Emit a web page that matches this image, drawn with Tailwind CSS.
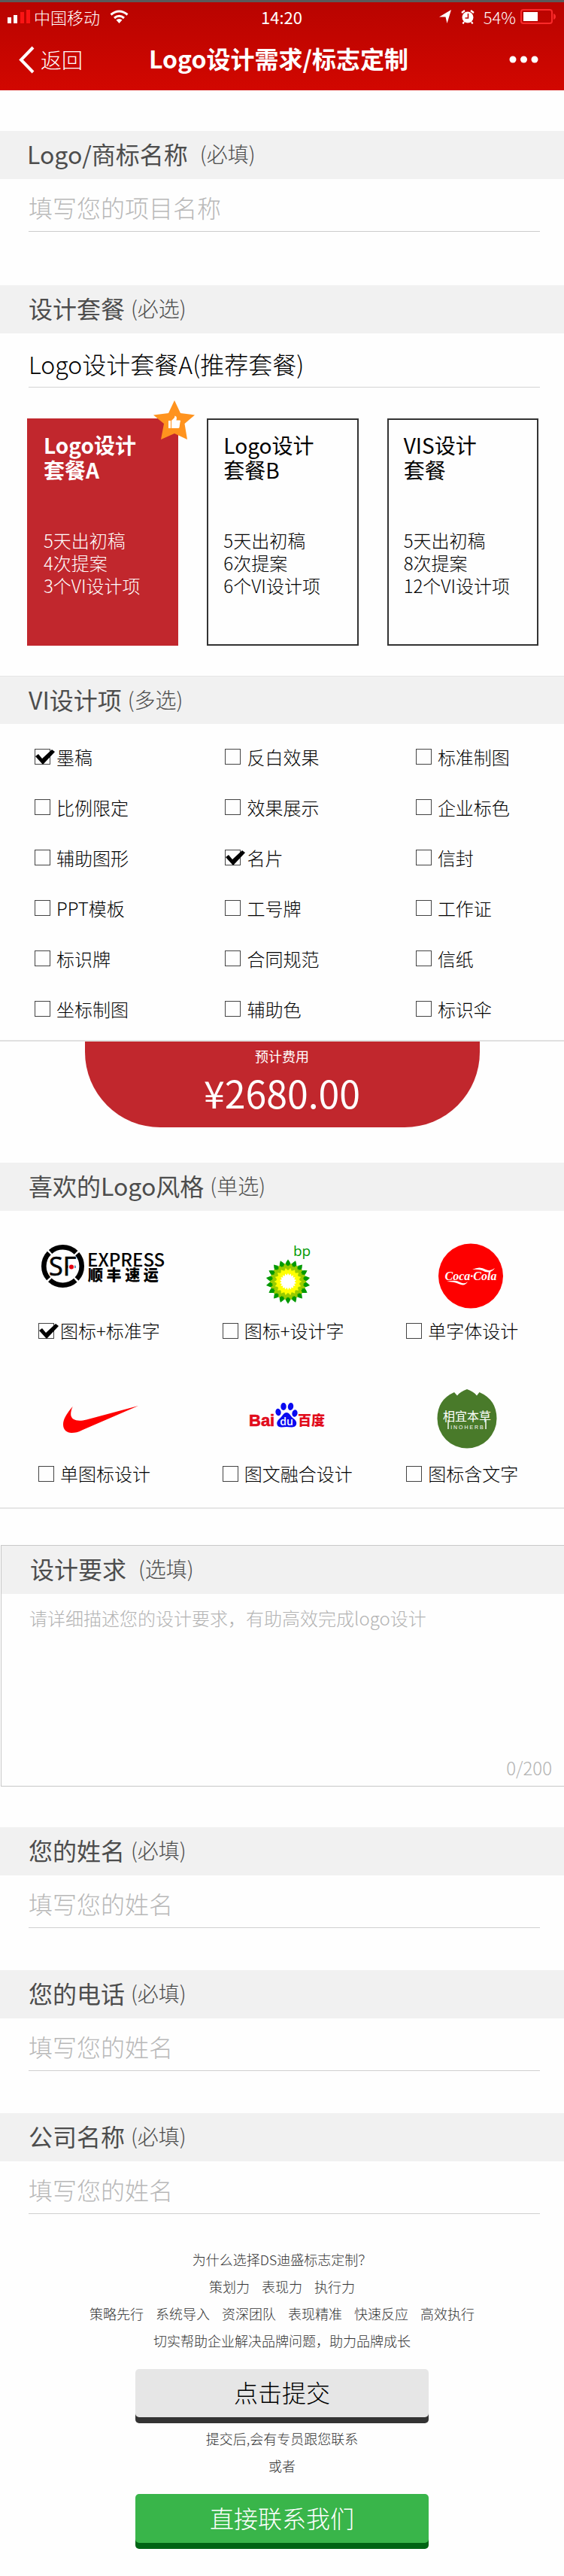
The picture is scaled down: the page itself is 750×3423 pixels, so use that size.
<!DOCTYPE html>
<html lang="zh-CN">
<head>
<meta charset="utf-8">
<meta name="viewport" content="width=device-width, initial-scale=1">
<title>Logo设计需求/标志定制</title>
<script src="https://cdn.jsdelivr.net/npm/@tailwindcss/browser@4"></script>
</head>
<body class="bg-[#fefefe] font-['Noto_Sans_CJK_SC',sans-serif] font-light text-black">

<svg class="hidden" aria-hidden="true">
  <defs>
    <path id="tick" d="M1 10 L5 7 L10 13 L23 1 L27 4 L11 21 Z"/>
    <path id="petal" d="M0 -29.5 Q5.5 -23 4.5 -14 L0 0 L-4.5 -14 Q-5.5 -23 0 -29.5Z"/>
    <g id="petals">
      <use href="#petal"/><use href="#petal" transform="rotate(20)"/><use href="#petal" transform="rotate(40)"/>
      <use href="#petal" transform="rotate(60)"/><use href="#petal" transform="rotate(80)"/><use href="#petal" transform="rotate(100)"/>
      <use href="#petal" transform="rotate(120)"/><use href="#petal" transform="rotate(140)"/><use href="#petal" transform="rotate(160)"/>
      <use href="#petal" transform="rotate(180)"/><use href="#petal" transform="rotate(200)"/><use href="#petal" transform="rotate(220)"/>
      <use href="#petal" transform="rotate(240)"/><use href="#petal" transform="rotate(260)"/><use href="#petal" transform="rotate(280)"/>
      <use href="#petal" transform="rotate(300)"/><use href="#petal" transform="rotate(320)"/><use href="#petal" transform="rotate(340)"/>
    </g>
  </defs>
</svg>

<header class="h-[120px] border-t-[3px] border-[#5a5a5a] bg-linear-to-b from-[#b80400] to-[#d20700] text-white">
  <div class="grid h-[38px] grid-cols-[1fr_auto_1fr] items-center pl-[10px] pr-[11px] text-[22px] leading-[30px]">
    <div class="flex items-center gap-[5px]">
      <svg class="h-[18px] w-[30px]" viewBox="0 0 30 18" aria-hidden="true">
        <path fill="#fff" d="M0 10h5v8H0zM8 7h5v11H8z"/><path fill="#fa1414" d="M17 3h5v15h-5zM25 0h5v18h-5z"/>
      </svg>
      <span>中国移动</span>
      <svg class="ml-2 h-[18px] w-[25px]" viewBox="0 0 25 18" fill="none" stroke="#fff" stroke-width="3" aria-hidden="true">
        <path d="M1.500 6.500Q12.500 -2.500 23.500 6.500M6 11Q12.500 5.500 19 11"/><path fill="#fff" stroke="none" d="M8.500 13.500Q12.500 10.500 16.500 13.500L12.500 18Z"/>
      </svg>
    </div>
    <span class="font-normal">14:20</span>
    <div class="flex items-center justify-end">
      <svg class="mr-[13px] h-[18px] w-[16px]" viewBox="0 0 16 18" fill="#fff" aria-hidden="true"><path d="M16 0L10.500 18L8.500 9.500L0 9.500Z"/></svg>
      <svg class="mr-3 h-[19px] w-[18px]" viewBox="0 0 18 19" aria-hidden="true">
        <circle cx="9" cy="10" r="7.500" fill="#fff"/><path d="M1 4L5 1M17 4L13 1M4 16L2.500 18.500M14 16L15.500 18.500" stroke="#fff" stroke-width="2.200"/><path d="M9.500 5V11H5.500" fill="none" stroke="#c00500" stroke-width="1.600"/>
      </svg>
      <span class="mr-[6px]">54%</span>
      <svg class="h-[20px] w-[47px]" viewBox="0 0 47 20" aria-hidden="true">
        <rect x="1" y="1" width="41" height="18" rx="3" fill="none" stroke="#fa2a2a" stroke-width="2"/><rect x="4" y="4" width="19" height="12" fill="#fff"/><path fill="#fa2a2a" d="M44 6Q47 7 47 10T44 14Z"/>
      </svg>
    </div>
  </div>
  <nav class="grid h-[76px] grid-cols-[1fr_auto_1fr] items-center pl-[25px] pr-[34px]">
    <a href="#" class="flex items-center gap-2 text-[28px]">
      <svg class="h-[37px] w-[21px]" viewBox="0 0 21 37" fill="none" stroke="#fff" stroke-width="4" aria-hidden="true"><path d="M19 2L3 18.500L19 35"/></svg>
      返回
    </a>
    <h1 class="pb-1 text-[32px] font-bold">Logo设计需求/标志定制</h1>
    <button type="button" aria-label="更多" class="justify-self-end">
      <svg class="h-[10px] w-[39px]" viewBox="0 0 39 10" fill="#fff" aria-hidden="true"><circle cx="5" cy="5" r="4.500"/><circle cx="19.500" cy="5" r="4.500"/><circle cx="34" cy="5" r="4.500"/></svg>
    </button>
  </nav>
</header>

<form>
  <section class="mt-[54px]">
    <label for="brand" class="flex h-16 items-center gap-4 bg-[#f1f1f1] px-9 pb-1 text-[32px] font-normal text-[#4d4d4d]">Logo/商标名称 <span class="text-[28px] font-light">(必填)</span></label>
    <div class="pr-8 pl-[38px]"><input id="brand" type="text" placeholder="填写您的项目名称" class="h-[70px] w-full border-b border-[#ccc] pt-1 text-[32px] outline-none placeholder:text-[#b8b8b8]"></div>
  </section>

  <section class="mt-[71px]">
    <h2 class="flex h-16 items-center gap-2 bg-[#f1f1f1] px-[38px] pb-1 text-[32px] font-normal text-[#4d4d4d]">设计套餐 <span class="text-[28px] font-light">(必选)</span></h2>
    <div class="pr-8 pl-[38px]"><p class="flex h-[72px] items-center border-b border-[#d4d4d4] pt-2 text-[32px]">Logo设计套餐A(推荐套餐)</p></div>
    <div class="mt-[41px] grid grid-cols-3 gap-[38px] pr-[34px] pl-9">
      <button type="button" aria-pressed="true" class="relative flex h-[302px] flex-col border-2 border-[#c1272d] bg-[#c1272d] px-5 pt-[17px] text-left text-white">
        <span class="text-[28px] leading-[33px] font-bold">Logo设计<br>套餐A</span>
        <span class="mt-[62px] text-[24px] leading-[30px] whitespace-nowrap">5天出初稿<br>4次提案<br>3个VI设计项</span>
        <svg class="absolute -top-[26px] -right-[24px] h-[53px] w-[55px]" viewBox="0 0 55 53" aria-hidden="true">
          <path fill="#ff931e" d="M28 0L36 17L55 19.500L41.500 31L45 52L28 44L10 52L14 31L0 19.500L20 17Z"/>
          <path fill="#fff" d="M20 27h3v10h-3zM24 27L28 23L28.500 20.500Q31 21 31 23.500L30.500 26.500H35.500Q36.500 27.500 35.500 29L34.500 36Q34 37 33 37H24Z"/>
        </svg>
      </button>
      <button type="button" aria-pressed="false" class="flex h-[302px] flex-col border-2 border-[#333] px-5 pt-[17px] text-left">
        <span class="text-[28px] leading-[33px] font-normal">Logo设计<br>套餐B</span>
        <span class="mt-[62px] text-[24px] leading-[30px] whitespace-nowrap">5天出初稿<br>6次提案<br>6个VI设计项</span>
      </button>
      <button type="button" aria-pressed="false" class="flex h-[302px] flex-col border-2 border-[#333] px-5 pt-[17px] text-left">
        <span class="text-[28px] leading-[33px] font-normal">VIS设计<br>套餐</span>
        <span class="mt-[62px] text-[24px] leading-[30px] whitespace-nowrap">5天出初稿<br>8次提案<br>12个VI设计项</span>
      </button>
    </div>
  </section>

  <section class="mt-10">
    <h2 class="flex h-16 items-center gap-2 border-t border-[#e6e6e6] bg-[#f1f1f1] px-[38px] pb-1 text-[32px] font-normal text-[#4d4d4d]">VI设计项 <span class="text-[28px] font-light">(多选)</span></h2>
    <div id="items" class="grid auto-rows-[67px] grid-cols-[36%_36%_28%] pt-[10px] pb-2 pl-[46px] text-[24px]"></div>
  </section>

  <section class="border-t-2 border-[#e0e0e0]">
    <div class="mx-auto flex h-[114px] w-[70%] flex-col items-center rounded-b-[100px] bg-[#c1272d] text-white">
      <span class="mt-[5px] text-[18px] leading-[28px] font-normal">预计费用</span>
      <output class="mt-1 text-[50px] leading-[60px] font-normal">¥2680.00</output>
    </div>
  </section>

  <section class="mt-[47px] border-b-2 border-[#e6e6e6] pb-[33px]">
    <h2 class="flex h-16 items-center gap-2 bg-[#f1f1f1] px-[38px] pb-1 text-[32px] font-normal text-[#4d4d4d]">喜欢的Logo风格 <span class="text-[28px] font-light">(单选)</span></h2>
    <div class="mt-[41px] grid grid-cols-[35%_35%_30%] gap-y-[60px] pl-[51px] text-[24px] leading-6">
      <label class="flex flex-col gap-4">
        <svg class="h-[90px] w-[180px]" viewBox="0 0 180 90" role="img" aria-label="顺丰速运">
          <circle cx="32.500" cy="32.500" r="25.200" fill="none" stroke="#000" stroke-width="6.600" stroke-dasharray="37.200 2.380" stroke-dashoffset="-20.980"/>
          <text x="14" y="45" font-family="Open Sans, sans-serif" font-size="34" font-weight="400" stroke="#000" stroke-width=".7">SF</text>
          <circle cx="44" cy="33.500" r="3.800" fill="#e60012" stroke="#fff" stroke-width="1.500"/>
          <text x="65" y="33" font-family="Noto Sans CJK SC, sans-serif" font-size="24" font-weight="500">EXPRESS</text>
          <text x="66" y="52" font-family="Noto Sans CJK SC, sans-serif" font-size="20" font-weight="900">顺 丰 速 运</text>
        </svg>
        <span class="flex items-center gap-2"><span class="relative flex"><input type="radio" name="style" checked class="peer size-[21px] appearance-none border border-[#444]"><svg class="absolute top-0 left-0 hidden h-[21px] w-[27px] peer-checked:block" viewBox="0 0 27 21" aria-hidden="true"><use href="#tick"/></svg></span>图标+标准字</span>
      </label>
      <label class="flex flex-col gap-4">
        <svg class="h-[90px] w-[180px]" viewBox="0 0 180 90" role="img" aria-label="bp">
          <g transform="translate(87 53)">
            <use href="#petals" fill="#090"/>
            <use href="#petals" fill="#9c0" transform="rotate(10) scale(.84)"/>
            <use href="#petals" fill="#9c0" transform="scale(.74)"/>
            <use href="#petals" fill="#ff0" transform="rotate(10) scale(.62)"/>
            <use href="#petals" fill="#ff0" transform="scale(.54)"/>
            <use href="#petals" fill="#fff" transform="scale(.38)"/>
            <circle r="7" fill="#fff"/>
          </g>
          <text x="94" y="19" font-family="Open Sans, sans-serif" font-size="19" font-weight="400" fill="#090">bp</text>
        </svg>
        <span class="flex items-center gap-2"><span class="relative flex"><input type="radio" name="style" class="peer size-[21px] appearance-none border border-[#444]"><svg class="absolute top-0 left-0 hidden h-[21px] w-[27px] peer-checked:block" viewBox="0 0 27 21" aria-hidden="true"><use href="#tick"/></svg></span>图标+设计字</span>
      </label>
      <label class="flex flex-col gap-4">
        <svg class="h-[90px] w-[180px]" viewBox="0 0 180 90" role="img" aria-label="Coca-Cola">
          <circle cx="86" cy="45.500" r="43" fill="#fe0000"/>
          <text x="86" y="51" text-anchor="middle" font-family="Liberation Serif, serif" font-style="italic" font-weight="700" font-size="16" fill="#fff">Coca·Cola</text>
          <path d="M54 53Q66 50 72 54Q78 57 82 53Q78 60 70 56Q64 53 54 53ZM88 37Q98 32 106 37Q112 40 118 35Q114 42 105 40Q98 36 88 37Z" fill="#fff"/>
        </svg>
        <span class="flex items-center gap-2"><span class="relative flex"><input type="radio" name="style" class="peer size-[21px] appearance-none border border-[#444]"><svg class="absolute top-0 left-0 hidden h-[21px] w-[27px] peer-checked:block" viewBox="0 0 27 21" aria-hidden="true"><use href="#tick"/></svg></span>单字体设计</span>
      </label>
      <label class="flex flex-col gap-4">
        <svg class="h-[90px] w-[180px]" viewBox="0 0 180 90" role="img" aria-label="Nike">
          <path fill="#fe0000" d="M45.700 29C37 39 33 46 33 53C33 60 38 64 44 64C49 64 53 63 59 60L133 28L64 46.500C52 49.500 44 47 43.200 40C43 36 44 33 45.700 29Z"/>
        </svg>
        <span class="flex items-center gap-2"><span class="relative flex"><input type="radio" name="style" class="peer size-[21px] appearance-none border border-[#444]"><svg class="absolute top-0 left-0 hidden h-[21px] w-[27px] peer-checked:block" viewBox="0 0 27 21" aria-hidden="true"><use href="#tick"/></svg></span>单图标设计</span>
      </label>
      <label class="flex flex-col gap-4">
        <svg class="h-[90px] w-[180px]" viewBox="0 0 180 90" role="img" aria-label="百度">
          <text x="35" y="55" font-family="Liberation Sans, sans-serif" font-size="22" font-weight="700" fill="#e10b1b" stroke="#e10b1b" stroke-width=".6">Bai</text>
          <g fill="#0a0af0">
            <ellipse cx="74" cy="36.500" rx="3.600" ry="4.800" transform="rotate(-12 74 36.500)"/><ellipse cx="81" cy="29" rx="3.700" ry="5"/>
            <ellipse cx="90.500" cy="29" rx="3.700" ry="5" transform="rotate(8 90.500 29)"/><ellipse cx="96" cy="38" rx="3.600" ry="4.800" transform="rotate(12 96 38)"/>
            <path d="M85 37C89 37 90 41 93 44C97 47 99 49 98 53C96 58 90 56 85 56C80 56 74 58 72.500 53C71.500 49 74 47 77 44C80 41 81 37 85 37Z"/>
          </g>
          <text x="85" y="54" text-anchor="middle" font-family="Open Sans, sans-serif" font-size="14" font-weight="600" fill="#fff">du</text>
          <text x="100" y="54" font-family="Noto Sans CJK SC, sans-serif" font-size="18" font-weight="900" fill="#e10b1b">百度</text>
        </svg>
        <span class="flex items-center gap-2"><span class="relative flex"><input type="radio" name="style" class="peer size-[21px] appearance-none border border-[#444]"><svg class="absolute top-0 left-0 hidden h-[21px] w-[27px] peer-checked:block" viewBox="0 0 27 21" aria-hidden="true"><use href="#tick"/></svg></span>图文融合设计</span>
      </label>
      <label class="flex flex-col gap-4">
        <svg class="h-[90px] w-[180px]" viewBox="0 0 180 90" role="img" aria-label="相宜本草">
          <path fill="#497a2a" d="M81 6Q90 9 94 14.500L97.500 10Q120.500 20 120.500 45A39.500 39.500 0 0 1 41.500 45Q41.500 20 64 10L68 14.500Q72 9 81 6Z"/>
          <text x="81" y="48" text-anchor="middle" font-family="Noto Sans CJK SC, sans-serif" font-size="16" font-weight="400" fill="#fff">相宜本草</text>
          <path d="M56 47V59M106 47V59" stroke="#fff" stroke-width="1.400"/>
          <text x="81" y="59" text-anchor="middle" font-family="Liberation Sans, sans-serif" font-size="7" font-weight="400" fill="#fff">I N O H E R B</text>
        </svg>
        <span class="flex items-center gap-2"><span class="relative flex"><input type="radio" name="style" class="peer size-[21px] appearance-none border border-[#444]"><svg class="absolute top-0 left-0 hidden h-[21px] w-[27px] peer-checked:block" viewBox="0 0 27 21" aria-hidden="true"><use href="#tick"/></svg></span>图标含文字</span>
      </label>
    </div>
  </section>

  <section class="relative mt-12 ml-px border-y border-l border-[#c8c8c8]">
    <label for="needs" class="flex h-16 items-center gap-4 bg-[#f1f1f1] px-[38px] pb-1 text-[32px] font-normal text-[#4d4d4d]">设计要求 <span class="text-[28px] font-light">(选填)</span></label>
    <textarea id="needs" maxlength="200" placeholder="请详细描述您的设计要求，有助高效完成logo设计" class="block h-[255px] w-full resize-none px-[37px] pt-[14px] text-[24px] outline-none placeholder:text-[#b3b3b3]"></textarea>
    <span class="absolute right-4 bottom-[6px] text-[24px] text-[#b3b3b3]">0/200</span>
  </section>

  <div class="mt-[54px] flex flex-col gap-14">
    <section>
      <label for="name" class="flex h-16 items-center gap-2 bg-[#f1f1f1] px-[38px] pb-1 text-[32px] font-normal text-[#4d4d4d]">您的姓名 <span class="text-[28px] font-light">(必填)</span></label>
      <div class="pr-8 pl-[38px]"><input id="name" type="text" placeholder="填写您的姓名" class="h-[70px] w-full border-b border-[#d0d0d0] pt-1 text-[32px] outline-none placeholder:text-[#b8b8b8]"></div>
    </section>
    <section>
      <label for="phone" class="flex h-16 items-center gap-2 bg-[#f1f1f1] px-[38px] pb-1 text-[32px] font-normal text-[#4d4d4d]">您的电话 <span class="text-[28px] font-light">(必填)</span></label>
      <div class="pr-8 pl-[38px]"><input id="phone" type="tel" placeholder="填写您的姓名" class="h-[70px] w-full border-b border-[#d0d0d0] pt-1 text-[32px] outline-none placeholder:text-[#b8b8b8]"></div>
    </section>
    <section>
      <label for="company" class="flex h-16 items-center gap-2 bg-[#f1f1f1] px-[38px] pb-1 text-[32px] font-normal text-[#4d4d4d]">公司名称 <span class="text-[28px] font-light">(必填)</span></label>
      <div class="pr-8 pl-[38px]"><input id="company" type="text" placeholder="填写您的姓名" class="h-[70px] w-full border-b border-[#d0d0d0] pt-1 text-[32px] outline-none placeholder:text-[#b8b8b8]"></div>
    </section>
  </div>

  <footer class="mt-[42px] flex flex-col items-center pb-9 text-[18px] leading-9 text-[#333]">
    <p>为什么选择DS迪盛标志定制？</p>
    <p class="flex gap-4"><span>策划力</span><span>表现力</span><span>执行力</span></p>
    <p class="flex gap-4"><span>策略先行</span><span>系统导入</span><span>资深团队</span><span>表现精准</span><span>快速反应</span><span>高效执行</span></p>
    <p>切实帮助企业解决品牌问题，助力品牌成长</p>
    <button type="submit" class="mt-5 mb-[10px] h-16 w-[52%] rounded-[5px] bg-[#e6e6e6] pb-1 text-[32px] text-black shadow-[0_8px_0_#333]">点击提交</button>
    <p>提交后,会有专员跟您联系</p>
    <p>或者</p>
    <button type="button" class="mt-5 mb-2 h-[65px] w-[52%] rounded-[5px] bg-[#39b54a] pb-1 text-[32px] text-white shadow-[0_8px_0_#006414]">直接联系我们</button>
  </footer>
</form>

<script>
  const items = ['墨稿','反白效果','标准制图','比例限定','效果展示','企业标色','辅助图形','名片','信封','PPT模板','工号牌','工作证','标识牌','合同规范','信纸','坐标制图','辅助色','标识伞'];
  const chosen = ['墨稿','名片'];
  document.getElementById('items').innerHTML = items.map(t => `
    <label class="flex items-center gap-2"><span class="relative flex"><input type="checkbox" name="item" ${chosen.includes(t) ? 'checked' : ''} class="peer size-[21px] appearance-none border border-[#444]"><svg class="absolute top-0 left-0 hidden h-[21px] w-[27px] peer-checked:block" viewBox="0 0 27 21" aria-hidden="true"><use href="#tick"/></svg></span>${t}</label>`).join('');
</script>
</body>
</html>
